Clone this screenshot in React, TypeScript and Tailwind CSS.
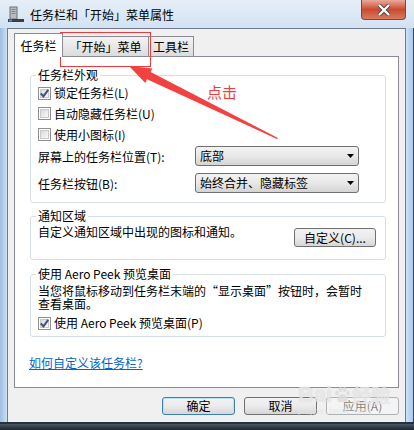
import React from "react";

const Check = ({ checked }: { checked?: boolean }) => (
  <span className="relative flex h-[13px] w-[13px] shrink-0 items-center justify-center border border-[#8e8f8f] bg-white">
    <span className="absolute inset-[1px] border border-[#c9c9c9] bg-linear-to-br from-[#d9d9d9] to-[#fbfbfb]" />
    {checked && (
      <svg className="relative" width="11" height="11" viewBox="0 0 11 11">
        <path d="M1.8 5.4 L4.4 8.4 L9.2 1.8" fill="none" stroke="#3d4f85" strokeWidth="2" />
      </svg>
    )}
  </span>
);

const Arrow = () => (
  <svg width="7" height="4" viewBox="0 0 7 4">
    <path d="M0 0 H7 L3.5 4 Z" fill="#000" />
  </svg>
);

const Select = ({ value }: { value: string }) => (
  <div className="flex h-[20px] w-[164px] items-center justify-between rounded-[3px] border border-[#707070] bg-linear-to-b from-[#f3f3f3] via-[#e8e8e8] to-[#d4d4d4] pl-[4px] pr-[4px]">
    <span>{value}</span>
    <Arrow />
  </div>
);

const Button = ({
  children,
  kind,
  className = "",
}: {
  children: React.ReactNode;
  kind?: "default" | "disabled";
  className?: string;
}) => {
  const border =
    kind === "default"
      ? "border-[#3c7fb1] shadow-[inset_0_0_0_1px_#b8e2f8]"
      : kind === "disabled"
        ? "border-[#adb2b5] text-[#838383] bg-none bg-[#f4f4f4]"
        : "border-[#707070]";
  return (
    <div
      className={`flex items-center justify-center rounded-[3px] border bg-linear-to-b from-[#f2f2f2] via-[#ebebeb] to-[#d6d6d6] ${border} ${className}`}
    >
      {children}
    </div>
  );
};

export default function App() {
  return (
    <div className="relative flex h-[430px] w-[414px] flex-col overflow-hidden bg-[#c6dbf1] font-[family-name:'Noto_Sans_CJK_SC',sans-serif] text-[12px] leading-[14px] text-black">
      {/* title bar */}
      <div className="flex h-[28px] shrink-0 items-center bg-linear-to-b from-[#e6eff8] to-[#d2e2f3] pl-[8px]">
        <svg width="16" height="16" viewBox="0 0 16 16">
          <rect x="2" y="1" width="7" height="12" fill="#b8bcc0" stroke="#6d7278" />
          <rect x="3.5" y="3" width="4" height="1" fill="#80868c" />
          <rect x="3.5" y="5" width="4" height="1" fill="#80868c" />
          <rect x="3.5" y="7" width="4" height="1" fill="#80868c" />
          <rect x="0" y="13" width="16" height="3" fill="#3a4046" />
          <rect x="1" y="13.5" width="3" height="2" fill="#4a8fd8" />
        </svg>
        <span className="ml-[6px] mt-[1px]">任务栏和「开始」菜单属性</span>
        <div className="ml-auto mr-[8px] flex h-[20px] w-[45px] self-start items-center justify-center rounded-b-[4px] border border-t-0 border-[#7a4a42] bg-linear-to-b from-[#e9a89a] via-[#c94a30] to-[#d77a62]">
          <svg width="14" height="12" viewBox="0 0 14 12">
            <path d="M2 1 L12 11 M12 1 L2 11" stroke="#4a4a4a" strokeWidth="4" />
            <path d="M2 1 L12 11 M12 1 L2 11" stroke="#ffffff" strokeWidth="2.2" />
          </svg>
        </div>
      </div>

      <div className="flex h-[394px] shrink-0">
        <div className="w-[7px] bg-linear-to-r from-[#9dbde2] via-[#b4cfec] to-[#cfe1f4]" />

        {/* client area */}
        <div className="flex w-[399px] flex-col border border-b-0 border-[#6f7b88] bg-[#f0f0f0]">
          {/* tabs */}
          <div className="flex h-[27px] items-end pl-[6px] pt-[4px]">
            <div className="relative z-10 -mb-px flex h-[24px] w-[49px] items-center justify-center border border-b-0 border-[#898c95] bg-white">
              任务栏
            </div>
            <div className="flex h-[20px] w-[86px] items-center justify-center border border-b-0 border-l-0 border-[#898c95] bg-linear-to-b from-[#f3f3f3] to-[#dcdcdc]">
              「开始」菜单
            </div>
            <div className="flex h-[20px] w-[45px] items-center justify-center border border-b-0 border-l-0 border-[#898c95] bg-linear-to-b from-[#f3f3f3] to-[#dcdcdc]">
              工具栏
            </div>
          </div>

          {/* panel */}
          <div className="ml-[6px] flex h-[332px] w-[385px] flex-col border border-[#898c95] bg-white pl-[15px]">
            <fieldset className="mt-[11px] w-[356px] rounded-[3px] border border-[#d5dfe5] px-[7px] pb-[9px]">
              <legend className="-ml-[2px] px-[2px]">任务栏外观</legend>
              <div className="flex h-[21px] items-center gap-[3px] pt-[1px]">
                <Check checked />
                <span>锁定任务栏(L)</span>
              </div>
              <div className="flex h-[21px] items-center gap-[3px]">
                <Check />
                <span>自动隐藏任务栏(U)</span>
              </div>
              <div className="flex h-[21px] items-center gap-[3px]">
                <Check />
                <span>使用小图标(I)</span>
              </div>
              <div className="mt-[1px] grid grid-cols-[157px_164px] items-center">
                <span className="pt-[2px]">屏幕上的任务栏位置(T):</span>
                <Select value="底部" />
              </div>
              <div className="mt-[7px] grid grid-cols-[157px_164px] items-center">
                <span className="pt-[2px]">任务栏按钮(B):</span>
                <Select value="始终合并、隐藏标签" />
              </div>
            </fieldset>

            <fieldset className="mt-[6px] w-[356px] rounded-[3px] border border-[#d5dfe5] pb-[12px] pl-[7px] pr-[9px]">
              <legend className="-ml-[2px] px-[2px]">通知区域</legend>
              <div className="flex items-start justify-between pt-[2px]">
                <span>自定义通知区域中出现的图标和通知。</span>
                <Button className="mt-[3px] h-[19px] w-[82px]">自定义(C)...</Button>
              </div>
            </fieldset>

            <fieldset className="mt-[7px] w-[356px] rounded-[3px] border border-[#d5dfe5] px-[7px] pb-[6px]">
              <legend className="-ml-[2px] px-[2px]">使用 Aero Peek 预览桌面</legend>
              <p className="pt-[3px] leading-[13px]">
                当您将鼠标移动到任务栏末端的“显示桌面”按钮时，会暂时
                <br />
                查看桌面。
              </p>
              <div className="mt-[6px] flex items-center gap-[3px]">
                <Check checked />
                <span>使用 Aero Peek 预览桌面(P)</span>
              </div>
            </fieldset>

            <a className="mt-[19px] -ml-px w-fit text-[#0066cc] underline">如何自定义该任务栏?</a>
          </div>

          {/* buttons */}
          <div className="mt-[9px] flex justify-end gap-[9px] pr-[6px]">
            <Button kind="default" className="h-[18px] w-[73px]">确定</Button>
            <Button className="h-[18px] w-[73px]">取消</Button>
            <Button kind="disabled" className="h-[18px] w-[73px]">应用(A)</Button>
          </div>
        </div>

        <div className="w-[8px] border-r border-[#3a4652] bg-linear-to-r from-[#cfe1f4] via-[#b7d5f3] to-[#a9c8ea]" />
      </div>

      <div className="h-[8px] shrink-0 border-t-2 border-[#26323c] bg-linear-to-b from-[#4a5866] to-[#1c252c]" />

      {/* watermark */}
      <div className="pointer-events-none absolute left-[298px] top-[384px] flex flex-col items-start text-[#e6e6e6] opacity-80">
        <div className="flex items-end font-[family-name:'Liberation_Sans',sans-serif] text-[22px] font-bold leading-[22px] [text-shadow:0_0_1px_#cfcfcf]">
          <span>Bai</span>
          <svg className="mx-[1px] mb-[2px]" width="18" height="18" viewBox="0 0 18 18" fill="#dcdcdc">
            <ellipse cx="4" cy="7" rx="2" ry="2.6" />
            <ellipse cx="7.5" cy="3.5" rx="2" ry="2.6" />
            <ellipse cx="11.5" cy="3.5" rx="2" ry="2.6" />
            <ellipse cx="15" cy="7" rx="2" ry="2.6" />
            <path d="M9.5 8 C6 8 4 12 4.5 14.5 C5 17 8 16 9.5 16 C11 16 14 17 14.5 14.5 C15 12 13 8 9.5 8 Z" />
          </svg>
          <span className="font-[family-name:'Noto_Sans_CJK_SC',sans-serif] text-[19px]">经验</span>
        </div>
        <span className="font-[family-name:'Liberation_Sans',sans-serif] text-[9px] leading-[10px]">jingyan.baidu.com</span>
      </div>

      {/* annotation */}
      <div className="pointer-events-none absolute left-[60px] top-[32px] h-[35px] w-[91px] border border-[#ee3a3a]" />
      <span className="pointer-events-none absolute left-[207px] top-[84px] text-[15px] leading-[16px] text-[#f23c3c]">点击</span>
      <svg className="pointer-events-none absolute left-0 top-0" width="414" height="430">
        <polygon
          points="129,66 152.3,68.5 150.6,72.1 278,138 277,139 147,79.3 145.3,82.9"
          fill="#f24141"
        />
      </svg>
    </div>
  );
}
